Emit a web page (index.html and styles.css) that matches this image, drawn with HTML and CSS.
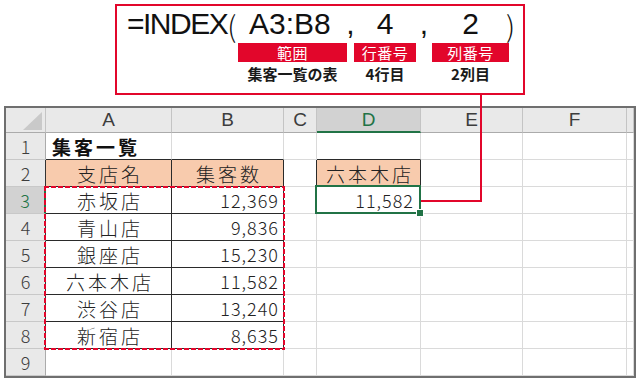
FILE: index.html
```html
<!DOCTYPE html>
<html lang="ja">
<head>
<meta charset="utf-8">
<title>INDEX</title>
<link rel="stylesheet" href="styles.css">
</head>
<body>
<div class="formula">
  <div class="f f1"><span class="fn">=INDEX</span><span class="par">(</span></div>
  <div class="f f2">A3:B8</div>
  <div class="f fc">,</div>
  <div class="f fc">4</div>
  <div class="f fc">,</div>
  <div class="f fc">2</div>
  <div class="f fe"><span class="par">)</span></div>

  <div></div><div class="lab">範囲</div><div></div><div class="lab">行番号</div><div></div><div class="lab">列番号</div><div></div>
  <div></div><div class="sub">集客一覧の表</div><div></div><div class="sub">4行目</div><div></div><div class="sub">2列目</div><div></div>
</div>

<div class="sheet">
  <div class="row r0">
    <div class="ch corner"><svg width="39" height="24" viewBox="0 0 39 24"><polygon points="36,4 36,22 17,22" fill="#c9c9c9"/></svg></div>
    <div class="ch">A</div><div class="ch">B</div><div class="ch">C</div><div class="ch sel">D</div><div class="ch">E</div><div class="ch">F</div><div class="ch"></div>
  </div>
  <div class="row r1">
    <div class="rh">1</div><div class="c title tt">集客一覧</div><div class="c tt"></div><div class="c"></div><div class="c tt"></div><div class="c"></div><div class="c"></div><div class="c"></div>
  </div>
  <div class="row r2">
    <div class="rh dk">2</div><div class="c tb th">支店名</div><div class="c tb th">集客数</div><div class="c tr"></div><div class="c tb th">六本木店</div><div class="c"></div><div class="c"></div><div class="c"></div>
  </div>
  <div class="row r3">
    <div class="rh sel">3</div><div class="c tb nm">赤坂店</div><div class="c tb num">12,369</div><div class="c"></div><div class="c num act">11,582</div><div class="c"></div><div class="c"></div><div class="c"></div>
  </div>
  <div class="row r4">
    <div class="rh dk">4</div><div class="c tb nm">青山店</div><div class="c tb num">9,836</div><div class="c"></div><div class="c"></div><div class="c"></div><div class="c"></div><div class="c"></div>
  </div>
  <div class="row r5">
    <div class="rh dk">5</div><div class="c tb nm">銀座店</div><div class="c tb num">15,230</div><div class="c"></div><div class="c"></div><div class="c"></div><div class="c"></div><div class="c"></div>
  </div>
  <div class="row r6">
    <div class="rh dk">6</div><div class="c tb nm">六本木店</div><div class="c tb num">11,582</div><div class="c"></div><div class="c"></div><div class="c"></div><div class="c"></div><div class="c"></div>
  </div>
  <div class="row r7">
    <div class="rh dk">7</div><div class="c tb nm">渋谷店</div><div class="c tb num">13,240</div><div class="c"></div><div class="c"></div><div class="c"></div><div class="c"></div><div class="c"></div>
  </div>
  <div class="row r8">
    <div class="rh dk">8</div><div class="c tb nm">新宿店</div><div class="c tb num">8,635</div><div class="c"></div><div class="c"></div><div class="c"></div><div class="c"></div><div class="c"></div>
  </div>
  <div class="row r9">
    <div class="rh">9</div><div class="c"></div><div class="c"></div><div class="c"></div><div class="c"></div><div class="c"></div><div class="c"></div><div class="c"></div>
  </div>

  <div class="range"></div>
</div>

<div class="connector"></div>
</body>
</html>
```

FILE: styles.css
```css
* { box-sizing: border-box; }

html, body {
  margin: 0;
  padding: 0;
  background: #ffffff;
}

body {
  width: 640px;
  height: 382px;
  overflow: hidden;
  font-family: "Noto Sans CJK JP", sans-serif;
  color: #222;
}

/* ---------- formula callout ---------- */
.formula {
  margin: 4px 0 11px 115px;
  width: 410px;
  height: 91px;
  border: 2px solid #e2062b;
  display: grid;
  grid-template-columns: 121px 109px 7px 62px 16px 77px 1fr;
  grid-template-rows: 36px 19px 21px;
  row-gap: 1px;
}

.f {
  font-family: "Liberation Sans", Arial, sans-serif;
  font-size: 30px;
  line-height: 36px;
  color: #111;
  white-space: nowrap;
  display: flex;
}

.f1 { padding-left: 10px; }
.fn { letter-spacing: -1.5px; }
.par {
  font-family: "Noto Sans CJK JP", sans-serif;
  font-weight: 300;
  font-size: 29px;
}
.f2 { padding-left: 11px; }
.fc { justify-content: center; }
.fe { margin-left: -3px; }

.lab {
  background: #e2062b;
  color: #ffffff;
  font-size: 15px;
  line-height: 19px;
  text-align: center;
  letter-spacing: 0.5px;
}

.sub {
  font-size: 15px;
  font-weight: 700;
  line-height: 22px;
  text-align: center;
  color: #1a1a1a;
  white-space: nowrap;
}

/* ---------- sheet ---------- */
.sheet {
  margin-left: 4px;
  width: 632px;
  border: 2px solid #6f6f6f;
  display: grid;
  grid-template-columns: 40px 126px 112px 33px 104px 102px 104px 7px;
  grid-template-rows: 25px repeat(9, 27px);
}

.row { display: contents; }

.r0 > * { grid-row: 1; }
.r1 > * { grid-row: 2; }
.r2 > * { grid-row: 3; }
.r3 > * { grid-row: 4; }
.r4 > * { grid-row: 5; }
.r5 > * { grid-row: 6; }
.r6 > * { grid-row: 7; }
.r7 > * { grid-row: 8; }
.r8 > * { grid-row: 9; }
.r9 > * { grid-row: 10; }

.row > :nth-child(1) { grid-column: 1; }
.row > :nth-child(2) { grid-column: 2; }
.row > :nth-child(3) { grid-column: 3; }
.row > :nth-child(4) { grid-column: 4; }
.row > :nth-child(5) { grid-column: 5; }
.row > :nth-child(6) { grid-column: 6; }
.row > :nth-child(7) { grid-column: 7; }
.row > :nth-child(8) { grid-column: 8; }

.ch, .rh {
  background: #e9e9e9;
  color: #3d3d3d;
  font-weight: 300;
  font-size: 19px;
  display: flex;
  align-items: center;
  justify-content: center;
}

.ch {
  border-right: 1px solid #c4c4c4;
  border-bottom: 1px solid #ababab;
  font-family: "Liberation Sans", Arial, sans-serif;
  font-size: 19px;
}

.ch.corner { align-items: stretch; justify-content: flex-start; }
.ch.corner svg { display: block; }

.ch.sel {
  background: #d2d2d2;
  color: #217346;
  border-bottom: 2px solid #217346;
}

.rh {
  border-right: 1px solid #ababab;
  border-bottom: 1px solid #c8c8c8;
  font-size: 18px;
}

.rh.dk { border-right-color: #333; }

.rh.sel {
  background: #d2d2d2;
  color: #217346;
  border-right: 2px solid #217346;
}

.c {
  border-right: 1px solid #dadada;
  border-bottom: 1px solid #dadada;
  display: flex;
  align-items: center;
  font-size: 19px;
  font-weight: 300;
  color: #222;
  white-space: nowrap;
}

.tt { border-bottom-color: #2a2a2a; }
.tr { border-right-color: #2a2a2a; }
.tb { border-right-color: #2a2a2a; border-bottom-color: #2a2a2a; }

.title {
  font-weight: 700;
  letter-spacing: 3px;
  padding-left: 6px;
  color: #111;
}

.th {
  background: #f8cbad;
  justify-content: center;
  letter-spacing: 3px;
  padding-left: 3px;
}

.nm {
  justify-content: center;
  letter-spacing: 3px;
  padding-left: 3px;
}

.num {
  justify-content: flex-end;
  font-size: 18px;
  letter-spacing: 1px;
  padding-right: 4px;
}

.act {
  position: relative;
  padding-right: 6px;
}

.act::after {
  content: "";
  position: absolute;
  left: -2px;
  top: -2px;
  right: -1px;
  bottom: -1px;
  border: 2px solid #217346;
}

.act::before {
  content: "";
  position: absolute;
  right: -4px;
  bottom: -4px;
  width: 6px;
  height: 6px;
  background: #217346;
  border: 1px solid #ffffff;
  z-index: 2;
}

.range {
  grid-column: 2 / 4;
  grid-row: 4 / 10;
  margin: -1px -1px -1px -2px;
  pointer-events: none;
  background:
    repeating-linear-gradient(90deg, #e2062b 0 5px, transparent 5px 7px) top left / 100% 2px no-repeat,
    repeating-linear-gradient(90deg, #e2062b 0 5px, transparent 5px 7px) bottom left / 100% 2px no-repeat,
    repeating-linear-gradient(180deg, #e2062b 0 5px, transparent 5px 7px) top left / 2px 100% no-repeat,
    repeating-linear-gradient(180deg, #e2062b 0 5px, transparent 5px 7px) top right / 2px 100% no-repeat;
}

/* connector from callout to D3 */
.connector {
  position: absolute;
  left: 421px;
  top: 95px;
  width: 61px;
  height: 107px;
  border-right: 2px solid #e2062b;
  border-bottom: 2px solid #e2062b;
}
```
